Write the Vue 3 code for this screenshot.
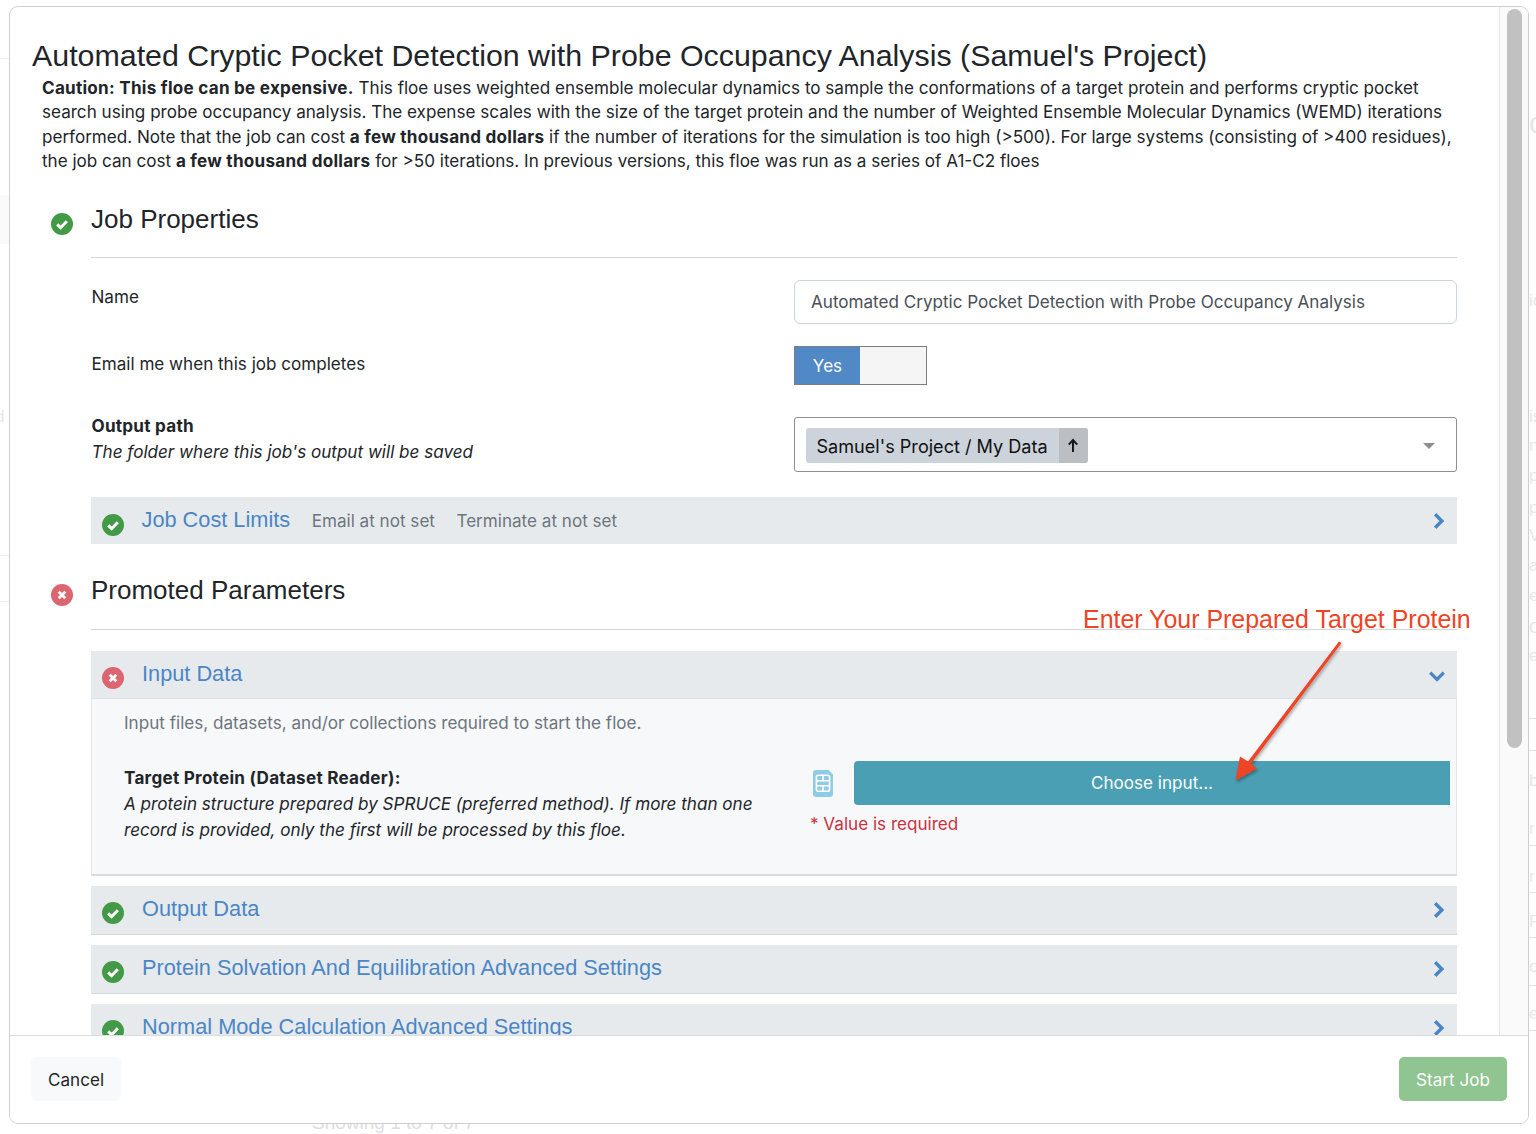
<script setup>
const ghosts = [
  { t: 'c', y: 108, s: 30 }, { t: 'ic', y: 292, s: 17 }, { t: 'is', y: 408, s: 17 },
  { t: 'n', y: 437, s: 17 }, { t: 'p', y: 467, s: 17 }, { t: 'p', y: 499, s: 17 },
  { t: 'V', y: 527, s: 17 }, { t: 'a', y: 557, s: 17 }, { t: 'e', y: 587, s: 17 },
  { t: 'o', y: 616, s: 20 }, { t: 'e', y: 647, s: 17 }, { t: 'b', y: 772, s: 17 },
  { t: 'r', y: 820, s: 17 }, { t: 'r', y: 868, s: 17 }, { t: 'P', y: 913, s: 17 },
  { t: 'o', y: 958, s: 17 }, { t: 'e', y: 1005, s: 17 }
];
const ghostLines = [718, 750, 845, 892, 937, 985, 1030];
const collapsed = [
  { title: 'Output Data' },
  { title: 'Protein Solvation And Equilibration Advanced Settings' },
  { title: 'Normal Mode Calculation Advanced Settings' }
];
</script>

<template>
  <div class="page">
    <div class="backdrop">
      <span v-for="(g, i) in ghosts" :key="i" class="ghost" :style="{ top: g.y + 'px', fontSize: g.s + 'px' }">{{ g.t }}</span>
      <i v-for="y in ghostLines" :key="y" class="ghost-line" :style="{ top: y + 'px' }"></i>
      <i class="ghost-left" style="top:58px"></i>
      <i class="ghost-left" style="top:555px"></i>
      <i class="ghost-left" style="top:601px"></i>
      <i class="ghost-panel"></i>
      <span class="ghost-d">d</span>
      <span class="ghost-foot">Showing 1 to 7 of 7</span>
    </div>

    <div class="modal">
      <div class="scroller">
        <div class="content">
          <h1 class="title">Automated Cryptic Pocket Detection with Probe Occupancy Analysis (Samuel's Project)</h1>
          <p class="desc"><b>Caution: This floe can be expensive.</b> This floe uses weighted ensemble molecular dynamics to sample the conformations of a target protein and performs cryptic pocket search using probe occupancy analysis. The expense scales with the size of the target protein and the number of Weighted Ensemble Molecular Dynamics (WEMD) iterations performed. Note that the job can cost <b>a few thousand dollars</b> if the number of iterations for the simulation is too high (&gt;500). For large systems (consisting of &gt;400 residues), the job can cost <b>a few thousand dollars</b> for &gt;50 iterations. In previous versions, this floe was run as a series of A1-C2 floes</p>

          <section class="section first">
            <svg class="status big" viewBox="0 0 22 22"><circle cx="11" cy="11" r="11" fill="#439a46"/><path d="M6.200 11.400l3.400 3.300 6.200-6.400" fill="none" stroke="#fff" stroke-width="3"/></svg>
            <h2 class="sec-title">Job Properties</h2>
          </section>
          <div class="rows">
            <div class="row name-row">
              <div class="lab">Name</div>
              <div class="input">Automated Cryptic Pocket Detection with Probe Occupancy Analysis</div>
            </div>
            <div class="row mail-row">
              <div class="lab mail">Email me when this job completes</div>
              <div class="toggle"><span class="yes">Yes</span><span class="no"></span></div>
            </div>
            <div class="row path-row">
              <div class="lab plain"><b>Output path</b><br><em>The folder where this job's output will be saved</em></div>
              <div class="select">
                <span class="tag"><span class="tag-t">Samuel's Project / My Data</span><span class="tag-up"><svg width="12" height="15" viewBox="0 0 12 15"><path d="M6 14V2.500M1.800 6.600L6 2l4.200 4.600" fill="none" stroke="#16191c" stroke-width="2"/></svg></span></span>
                <span class="caret"></span>
              </div>
            </div>
            <div class="bar cost">
              <svg class="status" viewBox="0 0 22 22"><circle cx="11" cy="11" r="11" fill="#439a46"/><path d="M6.200 11.400l3.400 3.300 6.200-6.400" fill="none" stroke="#fff" stroke-width="3"/></svg>
              <span class="bar-title">Job Cost Limits</span>
              <span class="bar-note">Email at not set</span>
              <span class="bar-note">Terminate at not set</span>
              <svg class="chev" viewBox="0 0 10 16"><path d="M2 2l6 6-6 6" fill="none" stroke="#4a86c5" stroke-width="3"/></svg>
            </div>
          </div>

          <section class="section second">
            <svg class="status big" viewBox="0 0 22 22"><circle cx="11" cy="11" r="11" fill="#dc6570"/><path d="M7.700 7.700l6.600 6.600M14.300 7.700l-6.600 6.600" fill="none" stroke="#fff" stroke-width="2.800"/></svg>
            <h2 class="sec-title">Promoted Parameters</h2>
          </section>
          <div class="rows params">
            <div class="bar open">
              <svg class="status" viewBox="0 0 22 22"><circle cx="11" cy="11" r="11" fill="#dc6570"/><path d="M7.700 7.700l6.600 6.600M14.300 7.700l-6.600 6.600" fill="none" stroke="#fff" stroke-width="2.800"/></svg>
              <span class="bar-title">Input Data</span>
              <svg class="chev down" viewBox="0 0 16 10"><path d="M2 2l6 6 6-6" fill="none" stroke="#4a86c5" stroke-width="3"/></svg>
            </div>
            <div class="panel">
              <p class="panel-note">Input files, datasets, and/or collections required to start the floe.</p>
              <div class="panel-row">
                <div class="panel-lab"><b>Target Protein (Dataset Reader):</b><br><em>A protein structure prepared by SPRUCE (preferred method). If more than one record is provided, only the first will be processed by this floe.</em></div>
                <div class="panel-ctl">
                  <div class="choose-line">
                    <svg class="file" viewBox="0 0 20 27"><path d="M3 0h12.500l4.500 4.500V24a3 3 0 0 1-3 3H3a3 3 0 0 1-3-3V3a3 3 0 0 1 3-3z" fill="#90cbe6"/><rect x="3.400" y="5.200" width="13.200" height="16" rx="2" fill="none" stroke="#fff" stroke-width="1.600"/><path d="M3.400 10.800h13.200M3.400 15.800h13.200M10 5.200v5.600M10 15.800v5.400" stroke="#fff" stroke-width="1.600"/></svg>
                    <button class="choose">Choose input...</button>
                  </div>
                  <div class="req">* Value is required</div>
                </div>
              </div>
            </div>
            <div v-for="c in collapsed" :key="c.title" class="bar closed">
              <svg class="status" viewBox="0 0 22 22"><circle cx="11" cy="11" r="11" fill="#439a46"/><path d="M6.200 11.400l3.400 3.300 6.200-6.400" fill="none" stroke="#fff" stroke-width="3"/></svg>
              <span class="bar-title">{{ c.title }}</span>
              <svg class="chev" viewBox="0 0 10 16"><path d="M2 2l6 6-6 6" fill="none" stroke="#4a86c5" stroke-width="3"/></svg>
            </div>
          </div>
        </div>
        <div class="track"><div class="thumb"></div></div>
      </div>

      <div class="footer">
        <button class="cancel">Cancel</button>
        <button class="start">Start Job</button>
      </div>

      <div class="note">Enter Your Prepared Target Protein</div>
      <svg class="arrow" width="140" height="160" viewBox="0 0 140 160">
        <defs>
          <filter id="sh" x="-30%" y="-30%" width="160%" height="160%"><feDropShadow dx="1" dy="2" stdDeviation="1.500" flood-color="#000" flood-opacity=".35"/></filter>
        </defs>
        <path filter="url(#sh)" d="M107 2.500L109.500 4L19 124.700L25 129.500L3.500 141.500L8 117.500L16 122.500z" fill="#ee4426"/>
      </svg>
    </div>
  </div>
</template>

<style scoped>
.page { position: relative; width: 1536px; height: 1134px; overflow: hidden; background: #fff; font-family: Inter, "Liberation Sans", sans-serif; color: #212529; padding: 6px 0 0 9px; box-sizing: border-box; }
.backdrop { position: absolute; inset: 0; color: #e6e7e8; font-family: "Liberation Sans", sans-serif; }
.ghost { position: absolute; left: 1529px; line-height: 1; }
.ghost-line { position: absolute; left: 1529px; right: 0; height: 1px; background: #e3e4e5; }
.ghost-left { position: absolute; left: 0; width: 9px; height: 1px; background: #f0f0f0; }
.ghost-panel { position: absolute; left: 0; top: 195px; width: 9px; height: 49px; background: #fafafa; }
.ghost-d { position: absolute; left: -5px; top: 407px; font-size: 17px; color: #e6e7e8; }
.ghost-foot { position: absolute; left: 312px; top: 1112px; font-size: 19px; color: #dcdee0; }
.modal { position: relative; width: 1520px; height: 1118px; box-sizing: border-box; background: #fff; border: 1px solid #cfcfcf; border-radius: 9px; display: flex; flex-direction: column; overflow: hidden; }
.scroller { flex: 1; min-height: 0; display: flex; overflow: hidden; }
.content { width: 1489px; flex: none; box-sizing: border-box; padding: 31px 42px 0 22px; font-size: 17.100px; }
.content b { font-weight: 700; letter-spacing: .26px; }
.title { margin: 0; font: 400 30.360px/36px "Liberation Sans", sans-serif; color: #212529; white-space: nowrap; }
.desc { margin: 2px 0 0 10px; font-size: 17.080px; line-height: 24.300px; width: 1418px; color: #212529; }
.section { position: relative; padding-left: 59px; display: flex; }
.section.first { margin-top: 30px; }
.section.second { margin-top: 30px; }
.section .big { position: absolute; left: 19px; top: 10px; }
.status { width: 22px; height: 22px; flex: none; }
.sec-title { margin: 0; font: 400 26px/32px "Liberation Sans", sans-serif; flex: 1; height: 54px; border-bottom: 1px solid #d5d5d5; }
.second .sec-title { height: 55px; }
.rows { margin-left: 59px; }
.row { display: grid; grid-template-columns: 703px 663px; font-size: 17.080px; line-height: 25px; }
.name-row { margin-top: 22px; }
.mail-row { margin-top: 22px; }
.path-row { margin-top: 32px; }
.lab { padding: 4px 0 0 .5px; }
.lab.mail { padding-top: 5px; }
.lab.plain { padding-top: 0; margin-top: -4px; line-height: 26px; }
.input { box-sizing: border-box; height: 44px; border: 1px solid #ced4da; border-radius: 6px; padding: 0 16px 2px; display: flex; align-items: center; color: #495057; white-space: nowrap; }
.toggle { width: 133px; height: 39px; box-sizing: border-box; border: 1px solid #7d7d7d; display: flex; }
.yes { width: 65px; background: #5089c6; color: #fff; display: flex; align-items: center; justify-content: center; }
.no { flex: 1; background: #f5f5f5; }
.select { box-sizing: border-box; height: 55px; border: 1px solid #8f8f8f; border-radius: 3px; display: flex; align-items: center; padding: 2px 21px 0 11px; justify-content: space-between; }
.tag { display: flex; height: 35px; background: #ccd3da; border-radius: 3px; overflow: hidden; align-items: center; color: #111; font-size: 18.100px; }
.tag-t { padding: 2px 11px 0 10.500px; }
.tag-up { width: 29px; height: 35px; background: #bbbfc3; display: flex; align-items: center; justify-content: center; }
.caret { width: 0; height: 0; border-left: 6px solid transparent; border-right: 6px solid transparent; border-top: 6px solid #8f8f8f; }
.bar { position: relative; display: flex; align-items: center; background: #e7eaed; padding-left: 11px; height: 48px; box-sizing: border-box; }
.bar .status { position: relative; top: 3px; }
.bar-title { font: 400 21.750px/26px "Liberation Sans", sans-serif; color: #4a86c5; margin-left: 18px; margin-top: -1px; }
.bar-note { font-size: 17.100px; color: #6c757d; margin-left: 21.500px; }
.chev { position: absolute; right: 12px; top: 15px; width: 13px; height: 18px; }
.chev.down { width: 18px; height: 12px; right: 11px; top: 19px; }
.cost { margin-top: 25px; height: 47px; }
.cost .status { top: 4px; }
.cost .bar-title { margin-left: 17.500px; }
.params { margin-top: 21px; }
.open { border-bottom: 1px solid #dfe2e5; }
.panel { box-sizing: border-box; height: 177px; background: #f7f8fa; border: 1px solid #e4e6e8; border-top: 0; border-bottom: 2px solid #d9dcdf; padding: 11px 6px 0 32px; line-height: 26px; }
.panel-note { margin: 0; color: #6c757d; }
.panel-row { display: grid; grid-template-columns: 686px 1fr; margin-top: 29px; }
.panel-lab { width: 650px; }
.choose-line { display: flex; align-items: center; gap: 21px; margin-top: -4px; }
.file { width: 20px; height: 27px; margin-left: 3px; flex: none; }
.choose { flex: 1; height: 44px; border: 0; border-radius: 4px 0 0 4px; background: #4a9fb5; color: #fff; font: inherit; }
.req { color: #c8323f; margin-top: 6px; }
.closed { margin-top: 10px; height: 49px; border-bottom: 1px solid #d5d8db; }
.closed .bar-title { margin-top: -3px; }
.track { width: 29px; flex: none; box-sizing: border-box; background: #fafafa; border-left: 1px solid #e8e8e8; padding: 2px 6px 0 7px; }
.thumb { height: 739px; background: #c1c1c1; border-radius: 8px; }
.footer { flex: none; box-sizing: border-box; height: 88px; border-top: 1px solid #dcdcdc; background: #fff; display: flex; justify-content: space-between; padding: 21px 21px 0; font-size: 17.100px; }
.footer button { height: 44px; border: 0; border-radius: 5px; font: inherit; }
.cancel { width: 90px; background: #f8f9fa; color: #212529; }
.start { width: 108px; background: #90c490; color: #fff; }
.note { position: absolute; left: 1073px; top: 596px; font: 400 24.950px/32px "Liberation Sans", sans-serif; color: #ee4426; white-space: nowrap; }
.arrow { position: absolute; left: 1222px; top: 632px; }
</style>

<style>
html, body { margin: 0; background: #fff; }
</style>
